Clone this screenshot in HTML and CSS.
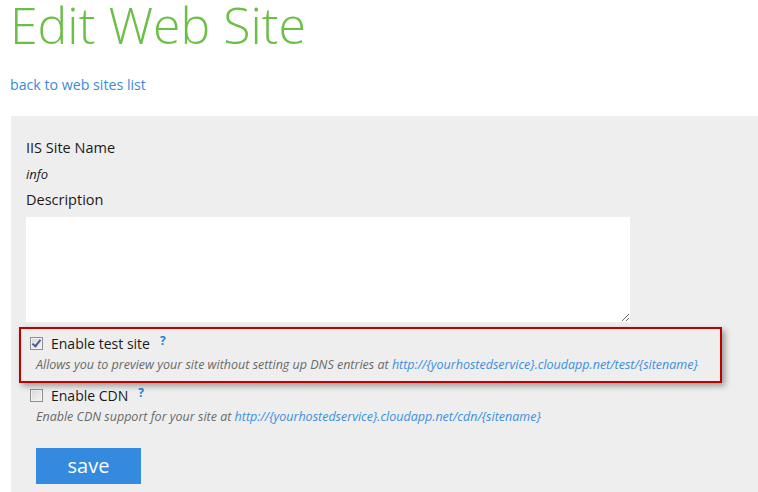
FILE: index.html
```html
<!DOCTYPE html>
<html lang="en">
<head>
<meta charset="utf-8">
<title>Edit Web Site</title>
<link rel="stylesheet" href="styles.css">
</head>
<body>
<div class="page">
  <h1 class="title">Edit Web Site</h1>
  <a class="back" href="#">back to web sites list</a>
  <form class="panel">
    <div class="label">IIS Site Name</div>
    <div class="value">info</div>
    <div class="label">Description</div>
    <textarea class="desc-box"></textarea>

    <div class="option">
      <label class="check-row">
        <input type="checkbox" class="check" checked>
        <span class="check-text">Enable test site</span>
        <span class="help">?</span>
      </label>
      <div class="hint">Allows you to preview your site without setting up DNS entries at <a href="#">http://{yourhostedservice}.cloudapp.net/test/{sitename}</a></div>
    </div>

    <div class="option">
      <label class="check-row">
        <input type="checkbox" class="check">
        <span class="check-text">Enable CDN</span>
        <span class="help">?</span>
      </label>
      <div class="hint">Enable CDN support for your site at <a href="#">http://{yourhostedservice}.cloudapp.net/cdn/{sitename}</a></div>
    </div>

    <button type="button" class="save">save</button>

    <div class="highlight"></div>
  </form>
</div>
</body>
</html>
```

FILE: styles.css
```css
html, body {
  margin: 0;
  padding: 0;
  background: #ffffff;
}

body {
  font-family: "Open Sans", "Noto Sans", "DejaVu Sans", sans-serif;
  color: #222222;
  overflow: hidden;
}

.page {
  padding-left: 10px;
}

.title {
  margin: 0;
  font-size: 50px;
  line-height: 50px;
  font-weight: 300;
  color: #6abf45;
}

.back {
  display: block;
  margin-top: 25px;
  font-size: 14.2px;
  line-height: 20px;
  color: #3a8ad8;
  text-decoration: none;
}

.panel {
  position: relative;
  margin-top: 21px;
  margin-left: 1px;
  padding: 19px 0 20px 15px;
  background: #eeeeee;
  display: flex;
  flex-direction: column;
  align-items: flex-start;
}

.label {
  font-size: 14.5px;
  line-height: 26px;
  color: #1a1a1a;
}

.value {
  font-size: 13px;
  line-height: 26px;
  font-style: italic;
  color: #1a1a1a;
}

.desc-box {
  margin-top: 4px;
  width: 604px;
  height: 105px;
  box-sizing: border-box;
  border: none;
  background: #ffffff;
  padding: 2px;
  font-family: inherit;
}

.option {
  margin-top: 12px;
  padding-left: 4px;
  display: flex;
  flex-direction: column;
}

.check-row {
  display: flex;
  align-items: flex-start;
  height: 20px;
  line-height: 20px;
}

.check {
  appearance: none;
  -webkit-appearance: none;
  margin: 3px 8px 0 0;
  width: 13px;
  height: 13px;
  box-sizing: border-box;
  border: 1px solid #8e8f8f;
  background: linear-gradient(135deg, #d8d8d8, #f6f6f6);
  box-shadow: inset 0 0 0 1px #f2f2f2;
  position: relative;
}

.check:checked::after {
  content: "";
  position: absolute;
  left: 3px;
  top: 0px;
  width: 3px;
  height: 7px;
  border-right: 2px solid #4a5c99;
  border-bottom: 2px solid #4a5c99;
  transform: rotate(38deg);
}

.check-text {
  font-size: 14px;
  color: #1a1a1a;
}

.help {
  margin-left: 10px;
  font-size: 12px;
  line-height: 14px;
  font-weight: 700;
  color: #1e7fe0;
}

.hint {
  margin-top: 2px;
  padding-left: 6px;
  font-size: 12.5px;
  line-height: 18px;
  font-style: italic;
  color: #6a6a6a;
  white-space: nowrap;
}

.hint a {
  color: #3b8ee0;
  text-decoration: none;
}

.save {
  margin-top: 22px;
  margin-left: 10px;
  width: 105px;
  height: 36px;
  border: none;
  background: #338ade;
  color: #ffffff;
  font-family: inherit;
  font-size: 20px;
  line-height: 36px;
  padding: 0 0 2px 0;
}

.highlight {
  position: absolute;
  left: 8px;
  top: 211px;
  width: 703px;
  height: 56px;
  box-sizing: border-box;
  border: 2px solid #c00000;
  box-shadow: 3px 3px 6px rgba(0, 0, 0, 0.35);
  pointer-events: none;
}
```
